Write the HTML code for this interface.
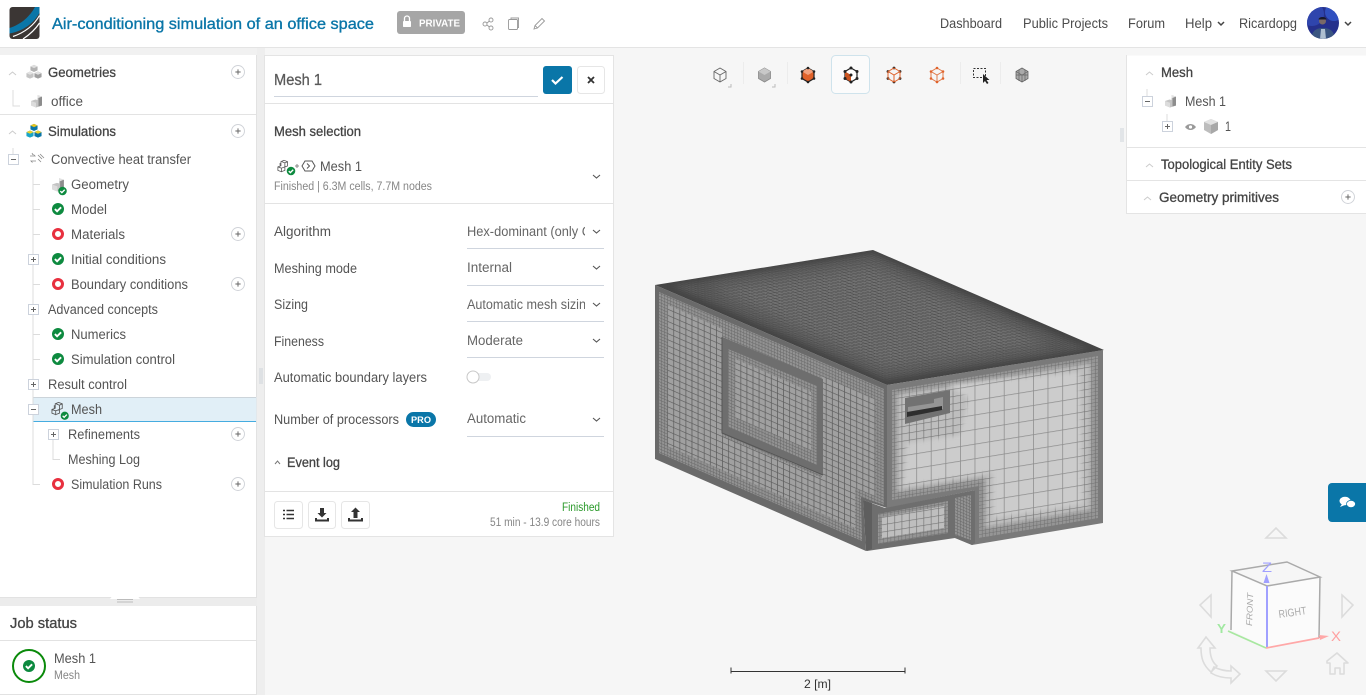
<!DOCTYPE html>
<html lang="en"><head><meta charset="utf-8"><title>Air-conditioning simulation of an office space</title>
<style>
html,body{margin:0;padding:0;background:#f6f6f6;width:1366px;height:695px;overflow:hidden}
svg{display:block;font-family:"Liberation Sans",sans-serif}
text{font-size:13.5px;fill:#545454}
.m{font-size:13.5px;fill:#444;stroke:#444;stroke-width:.3}
.s{font-size:11.5px;fill:#868686}
.n{fill:#4c4c4c}
.ln{stroke:#e3e3e3;stroke-width:1;fill:none}
.tr{stroke:#dcdcdc;stroke-width:1;fill:none}
.ch{stroke:#555;stroke-width:1.1;fill:none}
.ax{fill:none;stroke:#dcdcdc;stroke-width:1.600}
</style></head><body>
<svg width="1366" height="695" viewBox="0 0 1366 695" xmlns="http://www.w3.org/2000/svg">
<defs>
<symbol id="ok" viewBox="0 0 14 14" overflow="visible"><circle cx="7" cy="7" r="6" fill="#0d8a3f"/><path d="M3.900 7.100l2.200 2.200 4-4" fill="none" stroke="#fff" stroke-width="1.900"/></symbol>
<symbol id="bad" viewBox="0 0 14 14"><circle cx="7" cy="7" r="4.500" fill="none" stroke="#e8303f" stroke-width="3"/></symbol>
<symbol id="add" viewBox="0 0 16 16"><circle cx="8" cy="8" r="7.400" fill="#fff" stroke="#d0d3d8" stroke-width="1.100"/><path d="M5 8h6M8 5v6" stroke="#666" stroke-width="1.100"/></symbol>
<symbol id="pl" viewBox="0 0 11 11"><rect x=".5" y=".5" width="10" height="10" fill="#fff" stroke="#ccd2dc"/><path d="M3 5.500h5M5.500 3v5" stroke="#666" stroke-width="1"/></symbol>
<symbol id="mi" viewBox="0 0 11 11"><rect x=".5" y=".5" width="10" height="10" fill="#fff" stroke="#ccd2dc"/><path d="M3 5.500h5" stroke="#666" stroke-width="1"/></symbol>
<symbol id="geo" viewBox="0 0 14 14"><path d="M7.500 1l4.500 1.600v9L6 13.500 1 11.500V7l4.500-1.500L7.500 6z" fill="#c4c4c4"/><path d="M7.500 1l4.500 1.600-4.500 1.600z" fill="#e2e2e2"/><path d="M1 7l5 1.800v4.700L1 11.500z" fill="#dcdcdc"/><path d="M8.500 4v8.500l3.500-1V2.600z" fill="#8d8d8d"/></symbol>
<symbol id="meshi" viewBox="0 0 16 16"><path d="M8 1.500l4 1.500v5l-3 1v4l-4 1.500-4-1.500V9l3.500-1.300V3z M5.500 3L9 4.500v4.800M9 4.500L12 3M1 9l4 1.500V15M5 10.500L9 9M3.500 4.500v4" fill="none" stroke="#555" stroke-width=".9"/></symbol>
<symbol id="cubes" viewBox="0 0 20 18"><path d="M10 1l4 1.800v4.400l-4 1.800-4-1.800V2.800z" fill="#b2b2b2"/><path d="M5.500 8.500l4 1.800v4.400l-4 1.800-4-1.800v-4.400z" fill="#c4c4c4"/><path d="M14.500 8.500l4 1.800v4.400l-4 1.800-4-1.800v-4.400z" fill="#a0a0a0"/><path d="M10 1l4 1.800L10 4.600 6 2.800z" fill="#dedede"/><path d="M5.500 8.500l4 1.800-4 1.800-4-1.800zM14.500 8.500l4 1.800-4 1.800-4-1.800z" fill="#e2e2e2"/></symbol>
<symbol id="cubesC" viewBox="0 0 20 18"><path d="M10 1l4 1.800v4.400l-4 1.800-4-1.800V2.800z" fill="#0a76a8"/><path d="M5.500 8.500l4 1.800v4.400l-4 1.800-4-1.800v-4.400z" fill="#1aa5c8"/><path d="M14.500 8.500l4 1.800v4.400l-4 1.800-4-1.800v-4.400z" fill="#0a76a8"/><path d="M10 1l4 1.800L10 4.600 6 2.800z" fill="#e8c51d"/><path d="M5.500 8.500l4 1.800-4 1.800-4-1.800zM14.500 8.500l4 1.800-4 1.800-4-1.800z" fill="#eed12a"/></symbol>
<clipPath id="cv"><rect x="466" y="220" width="119" height="100"/></clipPath>
<clipPath id="av"><circle cx="1323" cy="23" r="16"/></clipPath>
<filter id="b6" x="-20%" y="-20%" width="140%" height="140%"><feGaussianBlur stdDeviation="7"/></filter>
<filter id="b3" x="-20%" y="-20%" width="140%" height="140%"><feGaussianBlur stdDeviation="3"/></filter>
<filter id="b1" x="-20%" y="-20%" width="140%" height="140%"><feGaussianBlur stdDeviation="2"/></filter>
<mask id="mTm" maskUnits="userSpaceOnUse" x="600" y="200" width="560" height="240"><polygon points="672,286 873,254 1088,349 886,379" fill="#fff" filter="url(#b3)"/></mask>
<mask id="mTi" maskUnits="userSpaceOnUse" x="600" y="200" width="560" height="240"><polygon points="708,288 872,263 1054,345 885,370" fill="#fff" filter="url(#b6)"/></mask>
<mask id="mRm" maskUnits="userSpaceOnUse" x="860" y="340" width="260" height="210"><polygon points="897,394 1091,363 1091,510 985,528 985,478 897,492" fill="#fff" filter="url(#b1)"/></mask>
<mask id="mRl" maskUnits="userSpaceOnUse" x="860" y="340" width="260" height="210"><polygon points="948,385 1080,372 1083,504 993,518 993,472 903,486 907,443 960,435 968,398" fill="#fff" filter="url(#b1)"/></mask>

<pattern id="pTop" width="5" height="5" patternUnits="userSpaceOnUse" patternTransform="matrix(1 .433 .99 -.16 655 285)"><rect width="5" height="5" fill="#717171"/><path d="M0 0H5M0 0V5" stroke="#4c4c4c" stroke-width="1.500"/></pattern>
<pattern id="pTopM" width="3.400" height="3.400" patternUnits="userSpaceOnUse" patternTransform="matrix(1 .433 .99 -.16 655 285)"><rect width="3.400" height="3.400" fill="#5c5c5c"/><path d="M0 0H3.400M0 0V3.400" stroke="#484848" stroke-width="1.200"/></pattern>
<pattern id="pL" width="6.100" height="6.100" patternUnits="userSpaceOnUse" patternTransform="matrix(1 .433 0 1 655 285)"><rect width="6.100" height="6.100" fill="#a0a0a0"/><path d="M0 0H6.100M0 0V6.100" stroke="#5e5e5e" stroke-width="1.500"/></pattern>
<pattern id="pLf" width="3.050" height="3.050" patternUnits="userSpaceOnUse" patternTransform="matrix(1 .433 0 1 655 285)"><rect width="3.050" height="3.050" fill="#929292"/><path d="M0 0H3.050M0 0V3.050" stroke="#686868" stroke-width="1"/></pattern>
<pattern id="pR" width="14.600" height="14.600" patternUnits="userSpaceOnUse" patternTransform="matrix(1 -.162 0 1 887 385)"><rect width="14.600" height="14.600" fill="#cccccc"/><path d="M0 0H14.600M0 0V14.600" stroke="#8c8c8c" stroke-width="1.500"/></pattern>
<pattern id="pRm" width="7.300" height="7.300" patternUnits="userSpaceOnUse" patternTransform="matrix(1 -.162 0 1 887 385)"><rect width="7.300" height="7.300" fill="#bebebe"/><path d="M0 0H7.300M0 0V7.300" stroke="#747474" stroke-width="1.300"/></pattern>
<pattern id="pRf" width="3.650" height="3.650" patternUnits="userSpaceOnUse" patternTransform="matrix(1 -.162 0 1 887 385)"><rect width="3.650" height="3.650" fill="#959595"/><path d="M0 0H3.650M0 0V3.650" stroke="#6e6e6e" stroke-width="1"/></pattern>
</defs>

<rect width="1366" height="695" fill="#f6f6f6"/>

<!-- header -->
<rect width="1366" height="47" fill="#fff"/><path d="M0 47.500H1366" stroke="#e4e4e4"/>
<rect x="9.500" y="7" width="30" height="32" rx="3" fill="#3b3634"/>
<path d="M9.500 28C22 24 30 16 35 7H39.500V13C33 24 23 31 9.500 33.500z" fill="#0a76a8"/>
<path d="M39.500 15.500C33 27 23 33 13 36.500M39.500 23C35 30 29 35 23 39" fill="none" stroke="#fff" stroke-width="1.200"/>
<text x="52" y="29" style="font-size:15.500px;fill:#0a76a8;stroke:#0a76a8;stroke-width:.35" textLength="322" lengthAdjust="spacingAndGlyphs">Air-conditioning simulation of an office space</text>
<rect x="397" y="11" width="68" height="23" rx="3" fill="#a6a6a6"/>
<path d="M404.500 21v-2.500a2.500 2.500 0 0 1 5 0V21" fill="none" stroke="#fff" stroke-width="1.300"/><rect x="403" y="21" width="8" height="6" rx=".8" fill="#fff"/>
<text x="419" y="26.500" font-weight="bold" style="font-size:10px;fill:#fff" textLength="41" lengthAdjust="spacingAndGlyphs">PRIVATE</text>
<g fill="none" stroke="#999" stroke-width=".9">
<circle cx="485" cy="24" r="2"/><circle cx="491" cy="20" r="2"/><circle cx="491" cy="28" r="2"/><path d="M487 23l2.500-2M487 25l2.500 2"/>
<rect x="508.500" y="19.500" width="9" height="10" rx="1"/><path d="M511 19v-1h7.500v9.500h-1"/>
<path d="M534 29l1-3.500 7-7 2.500 2.500-7 7zM535 25.500l2.500 2.500"/></g>

<text x="940" y="28" class="n" textLength="62" lengthAdjust="spacingAndGlyphs">Dashboard</text>
<text x="1023" y="28" class="n" textLength="85" lengthAdjust="spacingAndGlyphs">Public Projects</text>
<text x="1128" y="28" class="n" textLength="37" lengthAdjust="spacingAndGlyphs">Forum</text>
<text x="1185" y="28" class="n" textLength="27" lengthAdjust="spacingAndGlyphs">Help</text>
<text x="1239" y="28" class="n" textLength="58" lengthAdjust="spacingAndGlyphs">Ricardopg</text>
<path d="M1218 22l3 3 3-3M1345 22l3 3 3-3" fill="none" stroke="#444" stroke-width="1.500"/>
<g clip-path="url(#av)"><rect x="1307" y="7" width="32" height="32" fill="#25308c"/><circle cx="1312" cy="14" r="12" fill="#2f45ad"/><circle cx="1334" cy="12" r="9" fill="#3050c0"/><path d="M1311 39c1-9 6-11 12-11s11 2 12 11z" fill="#3a5580"/><path d="M1321 29h4l1 10h-6z" fill="#aebfd0"/><circle cx="1322.500" cy="21" r="3.500" fill="#7a6a68"/><path d="M1318.500 19.500a4 2.500 0 0 1 8 0z" fill="#1a1a2a"/></g>

<!-- gutters -->
<rect x="257" y="48" width="8" height="647" fill="#eeeeee"/>
<rect x="0" y="48" width="257" height="7" fill="#f1f1f1"/>
<rect x="0" y="597" width="257" height="9" fill="#ececec"/>

<!-- left panel -->
<rect x="0" y="55" width="256.500" height="542.500" fill="#fff"/>
<path d="M256.500 55V598M0 597.500H256.500" stroke="#e2e2e2"/>
<path d="M0 114.500H256" class="ln"/>
<path d="M9 75l3.500-3 3.500 3M9 134l3.500-3 3.500 3" fill="none" stroke="#ccc"/>
<use href="#cubes" x="25" y="64" width="18" height="16"/>
<text x="48" y="77" class="m" textLength="68" lengthAdjust="spacingAndGlyphs">Geometries</text>
<use href="#add" x="231" y="65" width="14" height="14"/>
<path d="M13 90v16h7" class="tr"/>
<use href="#geo" x="30" y="94" width="14" height="14"/>
<text x="51" y="106" textLength="32" lengthAdjust="spacingAndGlyphs">office</text>
<use href="#cubesC" x="25" y="123" width="18" height="16"/>
<text x="48" y="136" class="m" textLength="68" lengthAdjust="spacingAndGlyphs">Simulations</text>
<use href="#add" x="231" y="124" width="14" height="14"/>
<path d="M13 148v6M33 170V484.500H40M33 184.500H40M33 209.500H40M33 234.500H40M33 284.500H40M33 334.500H40M33 359.500H40" class="tr"/>
<path d="M53 440V459.500H60" class="tr"/>
<use href="#mi" x="8" y="154" width="11" height="11"/>
<g fill="none" stroke="#888" stroke-width=".8"><path d="M30 156h5l-1.500-1.500M36 161h-5l1.500 1.500M32 153l1 2M38 155l4 4M40 154l4 4M38 159l3 3"/></g>
<text x="51" y="164" textLength="140" lengthAdjust="spacingAndGlyphs">Convective heat transfer</text>

<use href="#geo" x="51" y="177" width="15" height="15"/><use href="#ok" x="57.500" y="186" width="10" height="10"/>
<text x="71" y="189" textLength="58" lengthAdjust="spacingAndGlyphs">Geometry</text>
<use href="#ok" x="51" y="202" width="14" height="14"/><text x="71" y="214" textLength="36" lengthAdjust="spacingAndGlyphs">Model</text>
<use href="#bad" x="51" y="227" width="14" height="14"/><text x="71" y="239" textLength="54" lengthAdjust="spacingAndGlyphs">Materials</text><use href="#add" x="231" y="227" width="14" height="14"/>
<use href="#pl" x="28" y="254" width="11" height="11"/>
<use href="#ok" x="51" y="252" width="14" height="14"/><text x="71" y="264" textLength="95" lengthAdjust="spacingAndGlyphs">Initial conditions</text>
<use href="#bad" x="51" y="277" width="14" height="14"/><text x="71" y="289" textLength="117" lengthAdjust="spacingAndGlyphs">Boundary conditions</text><use href="#add" x="231" y="277" width="14" height="14"/>
<use href="#pl" x="28" y="304" width="11" height="11"/>
<text x="48" y="314" textLength="110" lengthAdjust="spacingAndGlyphs">Advanced concepts</text>
<use href="#ok" x="51" y="327" width="14" height="14"/><text x="71" y="339" textLength="55" lengthAdjust="spacingAndGlyphs">Numerics</text>
<use href="#ok" x="51" y="352" width="14" height="14"/><text x="71" y="364" textLength="104" lengthAdjust="spacingAndGlyphs">Simulation control</text>
<use href="#pl" x="28" y="379" width="11" height="11"/>
<text x="48" y="389" textLength="79" lengthAdjust="spacingAndGlyphs">Result control</text>

<rect x="33.500" y="397" width="223" height="24" fill="#e1eff7"/>
<path d="M33.500 397.500H256" stroke="#ccd4da"/><path d="M33.500 421.500H256" stroke="#45ace0"/>
<use href="#mi" x="28" y="404" width="11" height="11"/>
<use href="#meshi" x="51" y="401" width="15" height="15"/><use href="#ok" x="60" y="411" width="9.500" height="9.500"/>
<text x="71" y="414" textLength="31" lengthAdjust="spacingAndGlyphs">Mesh</text>
<use href="#pl" x="48" y="429" width="11" height="11"/>
<text x="68" y="439" textLength="72" lengthAdjust="spacingAndGlyphs">Refinements</text><use href="#add" x="231" y="427" width="14" height="14"/>
<text x="68" y="464" textLength="72" lengthAdjust="spacingAndGlyphs">Meshing Log</text>
<use href="#bad" x="51" y="477" width="14" height="14"/><text x="71" y="489" textLength="91" lengthAdjust="spacingAndGlyphs">Simulation Runs</text><use href="#add" x="231" y="477" width="14" height="14"/>

<!-- splitter tab -->
<path d="M110 599l3-4h24l3 4z" fill="#fff"/><path d="M117 599.500h16M117 602h16" stroke="#bbb"/>
<path d="M260 368v16M262 368v16M1121 128v14M1123 128v14" stroke="#cfd4da" stroke-width="1"/>

<!-- job status -->
<rect x="0" y="606" width="256.500" height="88.500" fill="#fff"/>
<path d="M256.500 606V695M0 694.500H257M0 640.500H256" stroke="#e2e2e2"/>
<text x="10" y="628" class="m" style="font-size:14.500px" textLength="67" lengthAdjust="spacingAndGlyphs">Job status</text>
<circle cx="29" cy="666" r="16" fill="none" stroke="#0a8a0a" stroke-width="2"/>
<use href="#ok" x="22" y="659" width="14" height="14"/>
<text x="54" y="663" textLength="42" lengthAdjust="spacingAndGlyphs">Mesh 1</text>
<text x="54" y="679" class="s" textLength="26" lengthAdjust="spacingAndGlyphs">Mesh</text>

<!-- mesh panel -->
<rect x="264.500" y="55.500" width="349" height="481" fill="#fff" stroke="#e4e4e4"/>
<path d="M265 103.500H613M265 203.500H613M265 491.500H613" class="ln"/>
<text x="274" y="85" style="font-size:15.500px;fill:#5a5a5a;stroke:#5a5a5a;stroke-width:.3" textLength="48" lengthAdjust="spacingAndGlyphs">Mesh 1</text>
<path d="M274 96.500H538" stroke="#cfd5de"/>
<rect x="543" y="66" width="29" height="28" rx="3" fill="#0a76a8"/>
<path d="M552 80l3.500 3.500 7-6.500" fill="none" stroke="#fff" stroke-width="2.200"/>
<rect x="577.500" y="66.500" width="27" height="27" rx="3" fill="#fff" stroke="#e6e6e6"/>
<path d="M588 77l6 6M594 77l-6 6" stroke="#333" stroke-width="1.800"/>
<text x="274" y="136" class="m" textLength="87" lengthAdjust="spacingAndGlyphs">Mesh selection</text>
<use href="#meshi" x="277" y="159" width="14" height="14"/><use href="#ok" x="286" y="166" width="10" height="10"/>
<path d="M295 166h4M297 164v4" stroke="#888"/>
<path d="M302 166l3-5h7l3 5-3 5h-7z M307 163.500l2.500 2.500-2.500 2.500" fill="none" stroke="#555"/>
<text x="320" y="171" textLength="42" lengthAdjust="spacingAndGlyphs">Mesh 1</text>
<text x="274" y="190" class="s" textLength="158" lengthAdjust="spacingAndGlyphs">Finished | 6.3M cells, 7.7M nodes</text>
<path d="M593 175l3.500 3 3.500-3" class="ch"/>

<text x="274" y="236" textLength="57" lengthAdjust="spacingAndGlyphs">Algorithm</text>
<text x="274" y="273" textLength="83" lengthAdjust="spacingAndGlyphs">Meshing mode</text>
<text x="274" y="309" textLength="34" lengthAdjust="spacingAndGlyphs">Sizing</text>
<text x="274" y="346" textLength="50" lengthAdjust="spacingAndGlyphs">Fineness</text>
<text x="274" y="382" textLength="153" lengthAdjust="spacingAndGlyphs">Automatic boundary layers</text>
<text x="274" y="424" textLength="125" lengthAdjust="spacingAndGlyphs">Number of processors</text>
<rect x="406" y="412" width="30" height="15" rx="7.500" fill="#0a76a8"/>
<text x="411" y="423" font-weight="bold" style="font-size:9.500px;fill:#fff" textLength="20" lengthAdjust="spacingAndGlyphs">PRO</text>
<g clip-path="url(#cv)">
<text x="467" y="236" style="fill:#666" textLength="124" lengthAdjust="spacingAndGlyphs">Hex-dominant (only C</text>
<text x="467" y="309" style="fill:#666" textLength="126" lengthAdjust="spacingAndGlyphs">Automatic mesh sizing</text></g>
<text x="467" y="272" style="fill:#666" textLength="45" lengthAdjust="spacingAndGlyphs">Internal</text>
<text x="467" y="345" style="fill:#666" textLength="56" lengthAdjust="spacingAndGlyphs">Moderate</text>
<text x="467" y="423" style="fill:#666" textLength="59" lengthAdjust="spacingAndGlyphs">Automatic</text>
<path d="M467 248.500H604M467 285.500H604M467 321.500H604M467 357.500H604M467 436.500H604" stroke="#cfd5de"/>
<path d="M593 230l3.500 3 3.500-3M593 266l3.500 3 3.500-3M593 303l3.500 3 3.500-3M593 339l3.500 3 3.500-3M593 418l3.500 3 3.500-3" class="ch"/>
<rect x="467" y="373" width="24" height="8" rx="4" fill="#eef0f2"/>
<circle cx="473" cy="377" r="6" fill="#fff" stroke="#c8c8c8"/>
<path d="M275 464l2.500-3 2.500 3" fill="none" stroke="#777"/>
<text x="287" y="467" class="m" textLength="53" lengthAdjust="spacingAndGlyphs">Event log</text>
<rect x="274.500" y="501.500" width="28" height="27" rx="3" fill="#fff" stroke="#e6e6e6"/>
<rect x="308.500" y="501.500" width="27" height="27" rx="3" fill="#fff" stroke="#e6e6e6"/>
<rect x="341.500" y="501.500" width="28" height="27" rx="3" fill="#fff" stroke="#e6e6e6"/>
<path d="M283 510.500h2M283 514.500h2M283 518.500h2M286.500 510.500h7.500M286.500 514.500h7.500M286.500 518.500h7.500" stroke="#333" stroke-width="1.600"/>
<path d="M320 508h4v5h2.500l-4.500 4.500-4.500-4.500H320zM317 518v1.500h10V518h2v3.500h-14V518z" fill="#333"/>
<path d="M353.500 518v-6H351l4.500-4.500 4.500 4.500h-2.500v6zM350 518v1.500h11V518h2v3.500h-15V518z" fill="#333"/>
<text x="562" y="511" class="s" style="fill:#2a9a2a" textLength="38" lengthAdjust="spacingAndGlyphs">Finished</text>
<text x="490" y="526" class="s" textLength="110" lengthAdjust="spacingAndGlyphs">51 min - 13.9 core hours</text>

<!-- toolbar -->
<g stroke="#ececec"><path d="M743.500 62v22M787.500 62v22M960.500 62v22M1000.500 62v22"/></g>
<g fill="none" stroke="#666" stroke-width=".9"><path d="M720 68l6 3.500v7l-6 3.500-6-3.500v-7zM714 71.500l6 3.500 6-3.500M720 75v7"/></g>
<path d="M728 87h3v-3M772 87h3v-3" fill="none" stroke="#bbb"/>
<path d="M764.500 68l6 3.500v7l-6 3.500-6-3.500v-7z" fill="#aaa" stroke="#888" stroke-width=".8"/><path d="M758.500 71.500l6 3.500 6-3.500-6-3.500z" fill="#c8c8c8"/>
<path d="M808 68l6 3.500v7l-6 3.500-6-3.500v-7z" fill="#e0622a" stroke="#222" stroke-width="1.200"/><path d="M802 71.500l6 3.500 6-3.500-6-3.500z" fill="#f2a27e"/>
<rect x="831.500" y="55.500" width="38" height="38" rx="4" fill="#fbfbfb" stroke="#cfe3ec"/>
<path d="M851 68l6 3.500v7l-6 3.500-6-3.500v-7z" fill="#fff" stroke="#222" stroke-width="1.200"/><path d="M845 71.500l6 3.500v7l-6-3.500z" fill="#c9531f"/>
<g fill="#222"><circle cx="851" cy="68" r="1.500"/><circle cx="857" cy="71.500" r="1.500"/><circle cx="857" cy="78.500" r="1.500"/><circle cx="851" cy="82" r="1.500"/><circle cx="845" cy="78.500" r="1.500"/><circle cx="845" cy="71.500" r="1.500"/><circle cx="851" cy="75" r="1.500"/>
<circle cx="808" cy="68" r="1.300"/><circle cx="814" cy="71.500" r="1.300"/><circle cx="814" cy="78.500" r="1.300"/><circle cx="808" cy="82" r="1.300"/><circle cx="802" cy="78.500" r="1.300"/><circle cx="802" cy="71.500" r="1.300"/>
<circle cx="894" cy="68" r="1.400"/><circle cx="900" cy="71.500" r="1.400"/><circle cx="900" cy="78.500" r="1.400"/><circle cx="894" cy="82" r="1.400"/><circle cx="888" cy="78.500" r="1.400"/><circle cx="888" cy="71.500" r="1.400"/></g>
<path d="M894 68l6 3.500v7l-6 3.500-6-3.500v-7zM888 71.500l6 3.500 6-3.500M894 75v7" fill="none" stroke="#e0622a"/>
<path d="M937 68l6 3.500v7l-6 3.500-6-3.500v-7zM931 71.500l6 3.500 6-3.500M937 75v7" fill="none" stroke="#e07a4a"/>
<g fill="#e0622a"><circle cx="937" cy="68" r="1.300"/><circle cx="943" cy="71.500" r="1.300"/><circle cx="943" cy="78.500" r="1.300"/><circle cx="937" cy="82" r="1.300"/><circle cx="931" cy="78.500" r="1.300"/><circle cx="931" cy="71.500" r="1.300"/></g>
<rect x="973.500" y="68.500" width="12" height="9" fill="none" stroke="#333" stroke-dasharray="2 1.500"/>
<path d="M983 74l0 9 2-2 2 3 1.500-1-2-3h3z" fill="#222"/>
<path d="M1022 68l6 3.500v7l-6 3.500-6-3.500v-7z" fill="#aaa" stroke="#666" stroke-width=".8"/><path d="M1016 71.500l6 3.500 6-3.500M1022 75v7M1019 70v11M1025 70v11M1016 75l12 0" fill="none" stroke="#666" stroke-width=".7"/>

<!-- geometry mesh -->
<g>
<polygon points="655,285 873,250 1104,350 887,385" fill="#454545"/>
<polygon points="655,285 873,250 1104,350 887,385" fill="url(#pTopM)" mask="url(#mTm)"/>
<polygon points="655,285 873,250 1104,350 887,385" fill="url(#pTop)" mask="url(#mTi)"/>

<polygon points="655,285 887,385 887,508 863,500 866,551 655,459" fill="#6a6a6a"/>
<polygon points="659,292 884,389 884,505 861,497 862,541 659,453" fill="url(#pLf)"/>
<polygon points="668,305 722,329 722,436 822,478 822,376 876,400 876,496 855,488 855,528 667,446" fill="url(#pL)"/>
<polygon points="722,337 823,379 823,475 722,433" fill="#6e6e6e"/>
<polygon points="728,349 817,386 817,465 728,427" fill="url(#pLf)"/>
<polygon points="735,359 811,392 811,450 735,417" fill="url(#pL)"/>
<path d="M722 337v96l101 42" fill="none" stroke="#555" stroke-width="1"/>

<polygon points="887,385 1103,350 1103,523 972,545 955,538 955,498 975,494 975,490 887,508" fill="#7a7a7a"/>
<polygon points="892,390 1098,356 1098,518 979,538 979,486 892,500" fill="url(#pRf)"/>
<polygon points="892,390 1098,356 1098,518 979,538 979,486 892,500" fill="url(#pRm)" mask="url(#mRm)"/>
<polygon points="892,390 1098,356 1098,518 979,538 979,486 892,500" fill="url(#pR)" mask="url(#mRl)"/>
<polygon points="905,398 950,390 950,413 905,424" fill="#727272"/>
<polygon points="908,407 934,403 934,399 943,397 943,409 908,417" fill="#959595"/>
<polygon points="907,412 942,406 942,410 907,417" fill="#2e2e2e"/>

<polygon points="863,500 885,508 975,490 975,543 972,545 955,538 867,551" fill="#6e6e6e"/>
<polygon points="863,500 872,503 872,549 866,551" fill="#5e5e5e"/>
<polygon points="878,514 948,501 948,533 878,544" fill="url(#pRf)"/>
<polygon points="882,517 944,506 944,528 882,538" fill="url(#pRm)"/>
<polygon points="955,498 971,495 971,540 955,535" fill="url(#pLf)"/>
</g>

<!-- scale -->
<path d="M731 667.500v6M905 667.500v6M731 671.500H905" stroke="#333" stroke-width="1"/>
<text x="804" y="688" style="font-size:12px;fill:#333" textLength="27" lengthAdjust="spacingAndGlyphs">2 [m]</text>

<!-- right panel -->
<rect x="1127" y="55.500" width="239" height="158" fill="#fff"/>
<path d="M1126.500 55V214M1127 213.500H1366M1127 147.500H1366M1127 180.500H1366" stroke="#e4e4e4"/>
<path d="M1146 75l3.500-3 3.500 3M1146 167l3.500-3 3.500 3M1144 200l3.500-3 3.500 3" fill="none" stroke="#ccc"/>
<text x="1161" y="77" class="m" textLength="32" lengthAdjust="spacingAndGlyphs">Mesh</text>
<path d="M1147 89v7M1167 114v7" class="tr"/>
<use href="#mi" x="1142" y="96" width="11" height="11"/>
<use href="#geo" x="1164" y="94" width="14" height="14"/>
<text x="1185" y="106" textLength="41" lengthAdjust="spacingAndGlyphs">Mesh 1</text>
<use href="#pl" x="1162" y="121" width="11" height="11"/>
<path d="M1185 127c3-4 8-4 11 0-3 4-8 4-11 0z" fill="#999"/><circle cx="1190.500" cy="127" r="1.600" fill="#fff"/>
<path d="M1211 119l7 3v8l-7 4-7-4v-8z" fill="#bdbdbd"/><path d="M1204 122l7 3 7-3-7-3z" fill="#e2e2e2"/><path d="M1211 125v9l7-4v-8z" fill="#a8a8a8"/>
<text x="1225" y="131" textLength="6" lengthAdjust="spacingAndGlyphs">1</text>
<text x="1161" y="169" class="m" textLength="131" lengthAdjust="spacingAndGlyphs">Topological Entity Sets</text>
<text x="1159" y="202" class="m" textLength="120" lengthAdjust="spacingAndGlyphs">Geometry primitives</text>
<use href="#add" x="1341" y="190" width="14" height="14"/>

<!-- chat -->
<path d="M1366 483h-34a4 4 0 0 0-4 4v31a4 4 0 0 0 4 4h34z" fill="#0a76a8"/>
<ellipse cx="1345" cy="501" rx="5.500" ry="4.200" fill="#fff"/><path d="M1342 504l-2 3 5-2z" fill="#fff"/>
<ellipse cx="1351" cy="504" rx="4.500" ry="3.600" fill="#fff" stroke="#0a76a8" stroke-width=".7"/>

<!-- gizmo -->
<path d="M1266 538l10-10 10 10zM1266 671h20l-10 10z" class="ax"/>
<path d="M1211 595l-11 10 11 12zM1342 595l11 10-11 12z" class="ax"/>
<path d="M1232 571l35 15v62l-36-18z" fill="#fbfbfb"/><path d="M1267 586l53-9-1 61-53 10z" fill="#fbfbfb"/>
<path d="M1232 571l55-9 33 15-53 9zM1232 571l-1 59M1320 577l-1 61" fill="none" stroke="#aaa" stroke-width="1.500"/>
<path d="M1267 586v62" stroke="#a0a0ff" stroke-width="2"/><path d="M1266.500 574l-3 9h6z" fill="#a0a0ff"/>
<path d="M1266 648l53-10" stroke="#ffa8a8" stroke-width="1.700"/><path d="M1329 636l-10-1 1 5z" fill="#ffa8a8"/>
<path d="M1266 648l-38-17" stroke="#a8e8a0" stroke-width="1.700"/>
<text x="1262" y="572" style="font-size:13.500px;fill:#a0a0ff" textLength="10" lengthAdjust="spacingAndGlyphs">Z</text>
<text x="1331" y="641" style="font-size:14px;fill:#ffa0a0" textLength="10" lengthAdjust="spacingAndGlyphs">X</text>
<text x="1217" y="633" font-weight="bold" style="font-size:12.500px;fill:#a0e8a0" textLength="9" lengthAdjust="spacingAndGlyphs">Y</text>
<text transform="translate(1293,616) rotate(-8)" x="-14" y="0" style="font-size:11px;fill:#aaa" textLength="28" lengthAdjust="spacingAndGlyphs">RIGHT</text>
<text transform="translate(1252,626) rotate(-88)" x="0" y="0" font-style="italic" style="font-size:8.500px;fill:#aaa" textLength="33" lengthAdjust="spacingAndGlyphs">FRONT</text>
<path d="M1198 648l8-11 9 11h-5c0 8 2 14 7 18l-6 6c-8-7-10-14-10-24zM1214 667c6 3 12 4 17 4v-5l9 8-9 9v-5c-8 0-15-2-20-5z" class="ax"/>
<path d="M1327 661l10-8 11 10h-4v11h-4v-6h-5v6h-5v-11h-3z" class="ax" stroke-linejoin="round"/>
</svg>
</body></html>
